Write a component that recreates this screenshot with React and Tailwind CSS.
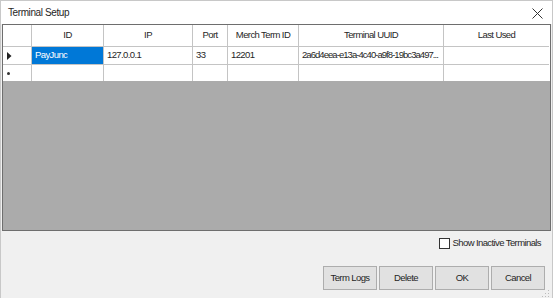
export default function App() {
  const cols = [29, 72, 89, 35, 71, 145, 105];
  const headers = ["", "ID", "IP", "Port", "Merch Term ID", "Terminal UUID", "Last Used"];
  const row1 = ["PayJunc", "127.0.0.1", "33", "12201", "2a6d4eea-e13a-4c40-a9f8-19bc3a497...", ""];
  const tmpl = { gridTemplateColumns: cols.map((c) => c + "px").join(" ") };
  return (
    <div
      className="w-[553px] h-[298px] bg-[#f0f0f0] border-t border-l border-r border-[#c8c8c8] flex flex-col text-[9.5px] tracking-[-0.6px] text-[#262626] overflow-hidden"
      style={{ fontFamily: '"Liberation Sans", Arial, sans-serif' }}
    >
      <div className="h-[23px] bg-white flex items-center justify-between pl-[7px] pr-[9px] shrink-0">
        <span className="text-[10px] tracking-[-0.4px]">Terminal Setup</span>
        <svg width="11" height="11" viewBox="0 0 11 11" className="mt-[1px]">
          <path d="M0.5 0.5 L10.5 10.5 M10.5 0.5 L0.5 10.5" stroke="#333" strokeWidth="1" />
        </svg>
      </div>
      <div className="ml-[1px] w-[549px] h-[207px] border border-[#6e6e6e] bg-[#ababab] shrink-0">
        <div className="grid bg-white h-[22px]" style={tmpl}>
          {headers.map((h, i) => (
            <div
              key={i}
              className="flex items-center justify-center border-r border-b border-[#c4c4c4] last:border-r-0"
            >
              {h}
            </div>
          ))}
        </div>
        <div className="grid bg-white h-[18px]" style={tmpl}>
          <div className="flex items-center pl-[4px] border-r border-b border-[#c4c4c4]">
            <svg width="5" height="8" viewBox="0 0 5 8">
              <path d="M0 0 L4.5 4 L0 8 Z" fill="#222" />
            </svg>
          </div>
          {row1.map((v, i) => (
            <div
              key={i}
              className={
                "flex items-center pl-[3px] border-r border-b border-[#c4c4c4] last:border-r-0 whitespace-nowrap overflow-hidden " +
                (i === 0 ? "bg-[#0078d7] text-white" : "") +
                (i === 4 ? " tracking-[-0.95px]" : "")
              }
            >
              {v}
            </div>
          ))}
        </div>
        <div className="grid bg-white h-[16px]" style={tmpl}>
          <div className="flex items-center pl-[4px] border-r border-[#c4c4c4]">
            <div className="w-[3px] h-[3px] rounded-full bg-[#333]" />
          </div>
          {row1.map((v, i) => (
            <div key={i} className="border-r border-[#c4c4c4] last:border-r-0" />
          ))}
        </div>
      </div>
      <div className="flex justify-end items-center h-[24px] pr-[11px] shrink-0">
        <div className="w-[11px] h-[11px] border border-[#333] bg-white mr-[3px]" />
        <span>Show Inactive Terminals</span>
      </div>
      <div className="flex justify-end gap-[2px] pr-[7px] mt-[11px] shrink-0">
        {["Term Logs", "Delete", "OK", "Cancel"].map((b) => (
          <div
            key={b}
            className="w-[54px] h-[24px] bg-[#e1e1e1] border border-[#adadad] flex items-center justify-center"
          >
            {b}
          </div>
        ))}
      </div>
      <div className="flex-1 flex justify-end items-end pr-[2px] pb-[1px]">
        <svg width="8" height="8" viewBox="0 0 8 8">
          <rect x="6" y="0" width="1" height="1" fill="#bbb" />
          <rect x="3" y="3" width="1" height="1" fill="#bbb" />
          <rect x="6" y="3" width="1" height="1" fill="#bbb" />
          <rect x="0" y="6" width="1" height="1" fill="#bbb" />
          <rect x="3" y="6" width="1" height="1" fill="#bbb" />
          <rect x="6" y="6" width="1" height="1" fill="#bbb" />
        </svg>
      </div>
      <div className="h-[1px] bg-[#c8c8c8] shrink-0" />
    </div>
  );
}
